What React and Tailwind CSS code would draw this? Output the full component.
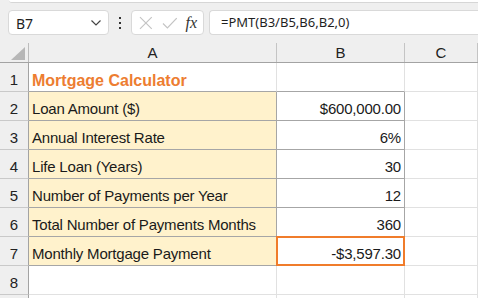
import React from 'react';

const rows = [
  { n: 1, a: 'Mortgage Calculator', b: '', title: true },
  { n: 2, a: 'Loan Amount ($)', b: '$600,000.00' },
  { n: 3, a: 'Annual Interest Rate', b: '6%' },
  { n: 4, a: 'Life Loan (Years)', b: '30' },
  { n: 5, a: 'Number of Payments per Year', b: '12' },
  { n: 6, a: 'Total Number of Payments Months', b: '360' },
  { n: 7, a: 'Monthly Mortgage Payment', b: '-$3,597.30', selected: true },
  { n: 8, a: '', b: '' },
  { n: 9, a: '', b: '', hidden: true },
];

function Toolbar() {
  return (
    <div className="bg-[#efefef] h-[43px] relative">
      <div className="ml-[9px] h-[3px] bg-white border-b border-[#d6d6d6] rounded-bl-[4px]" />
      <div className="flex items-center mt-[7px] h-[25px]">
        {/* name box */}
        <div className="ml-[8px] w-[101px] h-[25px] bg-white border border-[#d9d9d9] rounded-[4px] flex items-center pl-[7px] pr-[6px] pt-[1px]">
          <span className="text-[14px] text-[#1f1f1f] flex-1" style={{ fontFamily: '"Noto Sans", sans-serif' }}>B7</span>
          <svg width="12" height="8" viewBox="0 0 12 8">
            <path d="M1.5 1.5 L6 6 L10.5 1.5" fill="none" stroke="#444" strokeWidth="1.2" />
          </svg>
        </div>
        {/* vertical dots */}
        <div className="w-[22px] flex flex-col items-center gap-[3px]">
          <span className="w-[2px] h-[2px] bg-[#333]" />
          <span className="w-[2px] h-[2px] bg-[#333]" />
          <span className="w-[2px] h-[2px] bg-[#333]" />
        </div>
        {/* cancel / enter / fx */}
        <div className="w-[73px] h-[25px] bg-white border border-[#d9d9d9] rounded-[4px] flex items-center px-[6px]">
          <svg width="14" height="14" viewBox="0 0 14 14" className="ml-[1px]">
            <path d="M1 1 L13 13 M13 1 L1 13" stroke="#c4c4c4" strokeWidth="1.2" />
          </svg>
          <svg width="16" height="12" viewBox="0 0 16 12" className="ml-[9px]">
            <path d="M1 6.5 L5.5 11 L15 1" fill="none" stroke="#c4c4c4" strokeWidth="1.2" />
          </svg>
          <span className="ml-[8px] text-[16px] italic text-[#333] leading-none" style={{ fontFamily: '"Liberation Serif", serif' }}>fx</span>
        </div>
        {/* formula */}
        <div className="ml-[5px] flex-1 h-[25px] bg-white border border-r-0 border-[#d9d9d9] rounded-l-[4px] flex items-center pl-[11px] pt-[1px]">
          <span className="text-[13px] text-[#1f1f1f]" style={{ fontFamily: '"Noto Sans", sans-serif' }}>=PMT(B3/B5,B6,B2,0)</span>
        </div>
      </div>
    </div>
  );
}

function HeaderRow() {
  return (
    <div className="flex h-[20px] bg-[#efefef] border-b border-[#a3a3a3]">
      <div className="w-[29px] border-r border-[#bcbcbc] relative flex items-end justify-end pr-[3px] pb-[2px]">
        <svg width="14" height="13" viewBox="0 0 14 13">
          <path d="M14 0 L14 13 L0 13 Z" fill="#b7b7b7" />
        </svg>
      </div>
      {[['A', 'w-[248px]'], ['B', 'w-[128px]'], ['C', 'flex-1']].map(([l, w]) => (
        <div key={l} className={`${w} border-r border-[#c4c4c4] flex items-center justify-center text-[15px] text-[#222] pt-[1px]`}>
          {l}
        </div>
      ))}
    </div>
  );
}

export default function App() {
  return (
    <div className="w-[478px] h-[298px] overflow-hidden bg-white" style={{ fontFamily: '"Liberation Sans", Arial, sans-serif' }}>
      <Toolbar />
      <HeaderRow />
      {rows.map((r) => {
        const inTable = r.n >= 2 && r.n <= 7;
        const tableBottom = r.n >= 1 && r.n <= 7;
        return (
          <div key={r.n} className="flex h-[29px]">
            <div className="w-[29px] bg-[#efefef] border-r border-b border-r-[#a3a3a3] border-b-[#c9c9c9] flex items-center justify-center pt-[7px] text-[15px] text-[#222]">
              {r.hidden ? '' : r.n}
            </div>
            <div
              className={`w-[248px] border-r border-b flex items-center pl-[3px] pt-[7px] whitespace-nowrap ${
                inTable ? 'bg-[#fff2cc] border-r-[#a6a6a6]' : 'border-r-[#e1e1e1]'
              } ${tableBottom ? 'border-b-[#a6a6a6]' : 'border-b-[#e1e1e1]'} ${
                r.title ? 'text-[#ed7d31] font-bold text-[16px]' : 'text-[#1a1a1a] text-[15px] tracking-[-0.2px]'
              }`}
            >
              {r.a}
            </div>
            <div
              className={`w-[128px] relative border-r border-b flex items-center justify-end pr-[3px] pt-[7px] text-[15px] tracking-[-0.2px] text-[#1a1a1a] ${
                inTable ? 'border-r-[#a6a6a6]' : 'border-r-[#e1e1e1]'
              } ${tableBottom ? 'border-b-[#a6a6a6]' : 'border-b-[#e1e1e1]'}`}
            >
              {r.b}
              {r.selected && (
                <div className="absolute -top-[1px] -left-[1px] -right-[1px] -bottom-[1px] border-2 border-[#f07c2b]" />
              )}
            </div>
            <div className="flex-1 border-r border-b border-[#e1e1e1]" />
          </div>
        );
      })}
    </div>
  );
}
